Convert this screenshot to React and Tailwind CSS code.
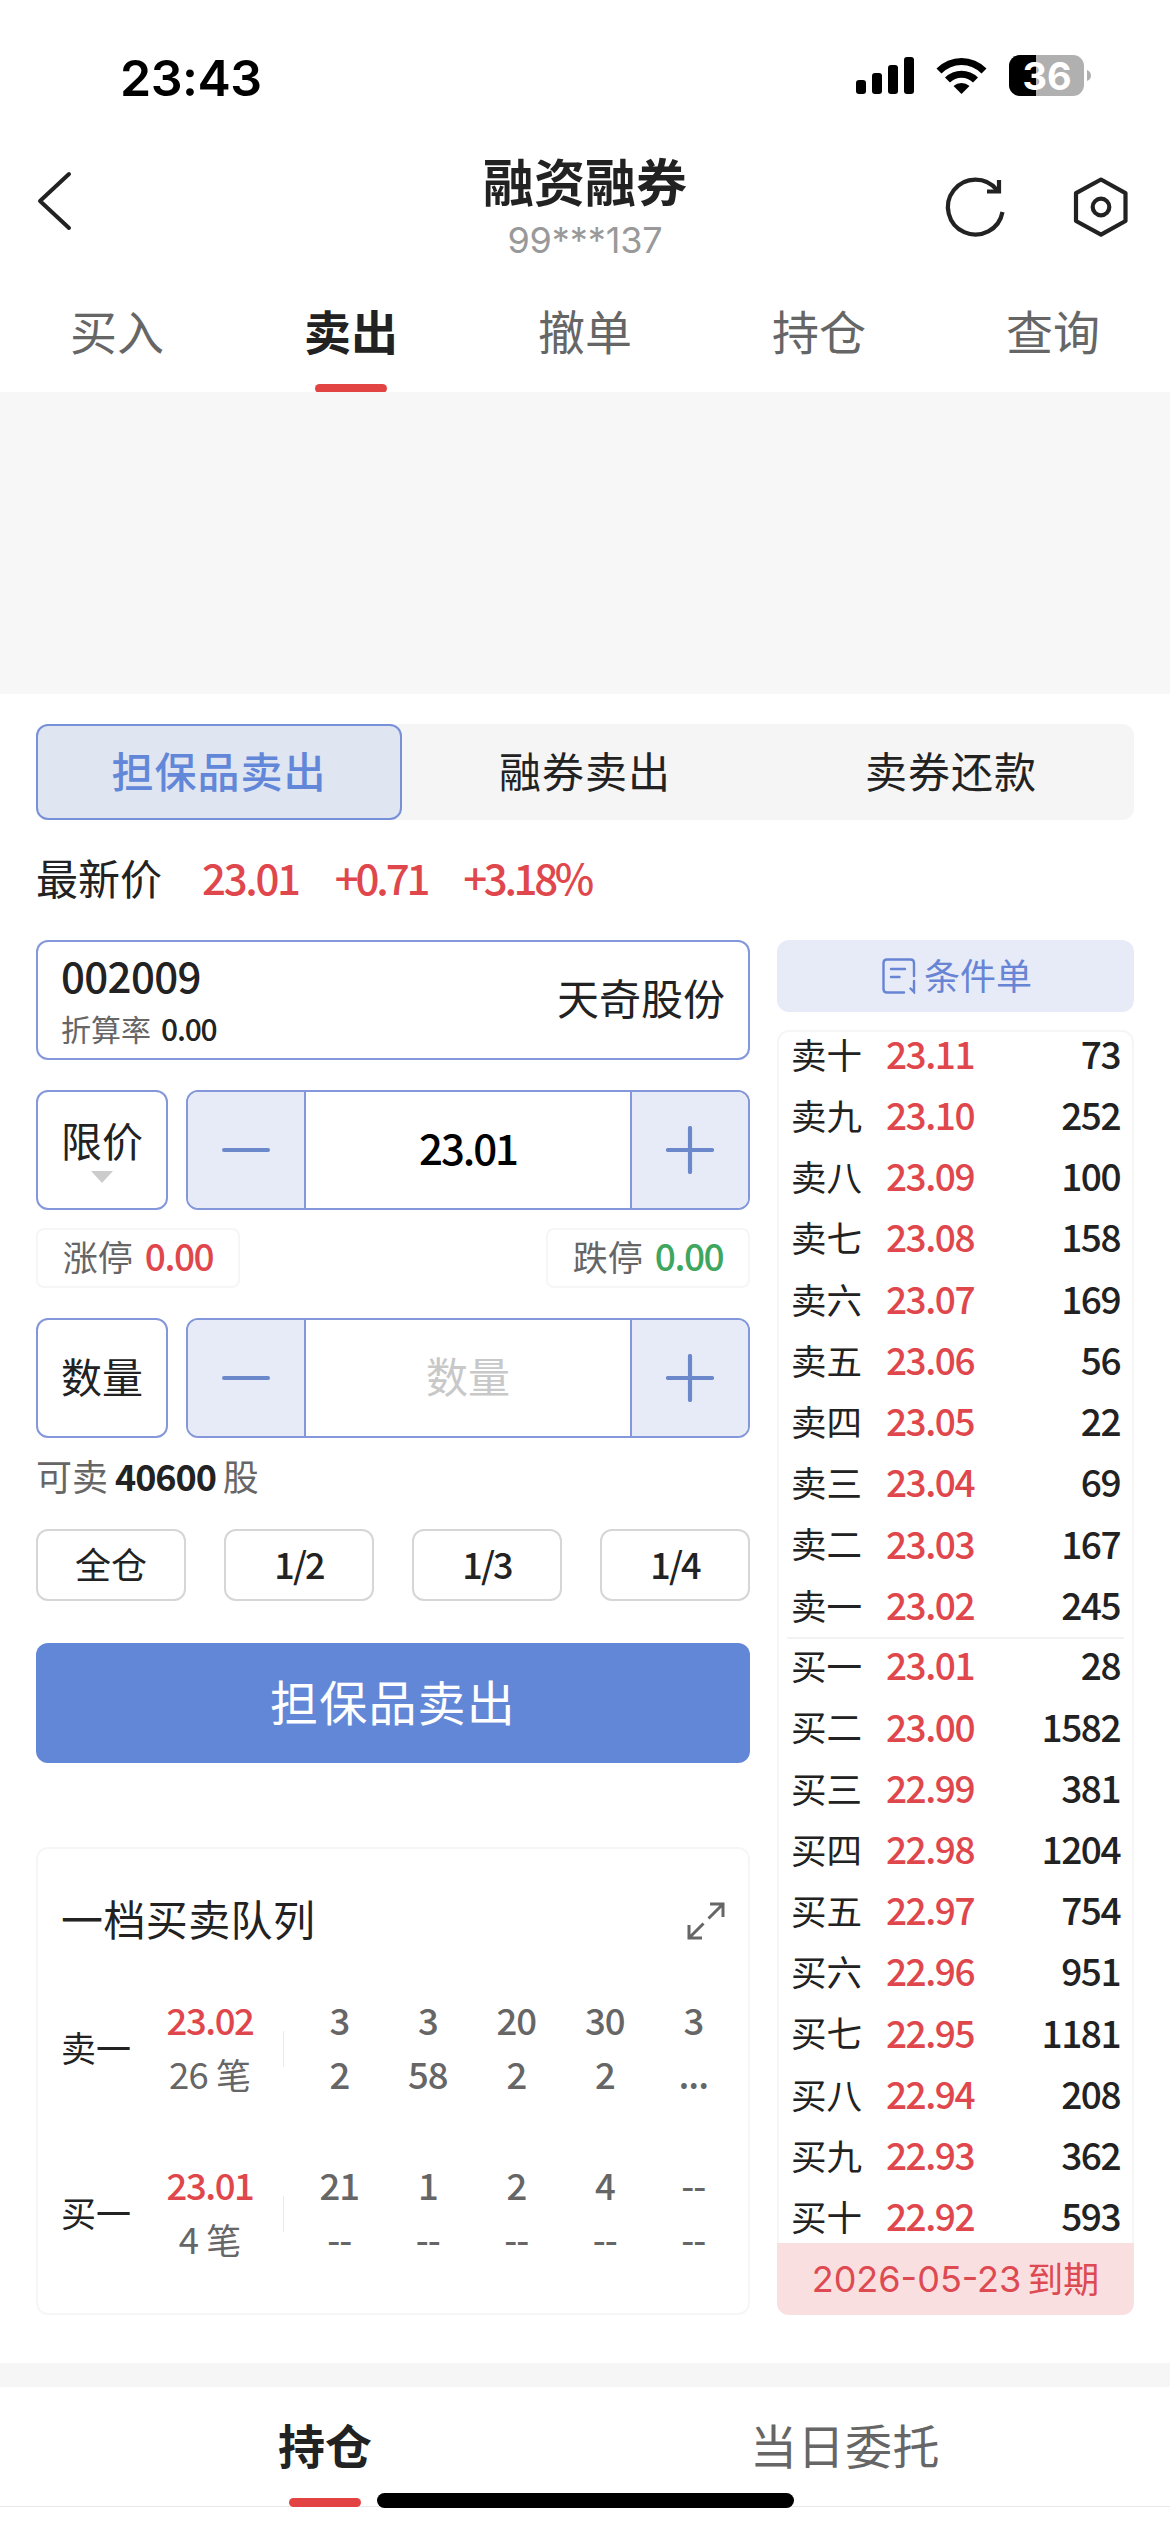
const SELLS = [
  ["卖十", "23.11", "73"],
  ["卖九", "23.10", "252"],
  ["卖八", "23.09", "100"],
  ["卖七", "23.08", "158"],
  ["卖六", "23.07", "169"],
  ["卖五", "23.06", "56"],
  ["卖四", "23.05", "22"],
  ["卖三", "23.04", "69"],
  ["卖二", "23.03", "167"],
  ["卖一", "23.02", "245"],
];

const BUYS = [
  ["买一", "23.01", "28"],
  ["买二", "23.00", "1582"],
  ["买三", "22.99", "381"],
  ["买四", "22.98", "1204"],
  ["买五", "22.97", "754"],
  ["买六", "22.96", "951"],
  ["买七", "22.95", "1181"],
  ["买八", "22.94", "208"],
  ["买九", "22.93", "362"],
  ["买十", "22.92", "593"],
];

const TABS = ["买入", "卖出", "撤单", "持仓", "查询"];
const RATIOS = ["全仓", "1/2", "1/3", "1/4"];

export default function App() {
  return (
    <div className="w-[1170px] h-[2532px] flex flex-col overflow-hidden bg-white text-[#222] leading-none font-['Noto_Sans_CJK_SC',sans-serif]">
      <StatusBar />
      <Header />
      <nav className="h-[110px] grid grid-cols-5">
        {TABS.map((tab) => (
          <Tab key={tab} label={tab} active={tab === "卖出"} />
        ))}
      </nav>
      <div className="h-[302px] bg-[#f7f7f7]" />

      <main className="h-[1669px] px-9 pt-[30px] flex flex-col">
        <div className="h-24 grid grid-cols-3 rounded-xl bg-[#f5f5f5] text-[42px] tracking-[1px]">
          <div className="pb-1 flex items-center justify-center rounded-xl border-2 border-[#7890d8] bg-[#dfe5f1] text-[#6286d8] font-medium">担保品卖出</div>
          <div className="pb-1 flex items-center justify-center">融券卖出</div>
          <div className="pb-1 flex items-center justify-center">卖券还款</div>
        </div>

        <div className="h-[120px] flex items-center">
          <Txt className="w-[166px] text-[42px]">最新价</Txt>
          <div className="flex gap-[36px] text-[42px] font-medium text-[#e0474c]">
            <Txt className="tracking-[-0.055em]">23.01</Txt>
            <Txt className="tracking-[-0.075em]">+0.71</Txt>
            <Txt className="tracking-[-0.08em]">+3.18%</Txt>
          </div>
        </div>

        <div className="flex justify-between">
          <section className="w-[714px]">
            <OrderForm />
            <QueueCard />
          </section>
          <OrderBook />
        </div>
      </main>

      <div className="h-6 bg-[#f6f6f6]" />
      <BottomTabs />
    </div>
  );
}

// bottom padding lifts the glyphs to the optical centre of their row
function Txt({ className = "", children }) {
  return <span className={`block shrink-0 pb-[0.12em] ${className}`}>{children}</span>;
}

function StatusBar() {
  return (
    <div className="h-[140px] pl-[120px] pr-[78px] pt-[54px] flex justify-between items-start text-black">
      <span className="font-['Inter',sans-serif] font-semibold text-[50px] tracking-[-0.5px] leading-[48px]">23:43</span>
      <svg width="236" height="44" viewBox="856 56 236 44">
        <rect x="856" y="82" width="10" height="14" rx="3" />
        <rect x="872" y="75" width="10" height="21" rx="3" />
        <rect x="888" y="67" width="10" height="29" rx="3" />
        <rect x="904" y="59" width="10" height="37" rx="3" />
        {/* wifi */}
        <path d="M936.500 70.500 A35 35 0 0 1 986.500 70.500 L981.500 75.500 A28 28 0 0 0 941.500 75.500 Z" />
        <path d="M945 79.500 A23.500 23.500 0 0 1 978 79.500 L973 84.500 A16.500 16.500 0 0 0 950 84.500 Z" />
        <path d="M953.500 88 A12 12 0 0 1 969.500 88 L961.500 96 Z" />
        {/* battery, 36% charged */}
        <rect x="1009" y="57" width="75" height="41" rx="11" fill="#b0b0b0" />
        <path d="M1036 57 H1020 A11 11 0 0 0 1009 68 V87 A11 11 0 0 0 1020 98 H1036 Z" />
        <path d="M1087 72 Q1091 73.500 1091 77.500 Q1091 81.500 1087 83 Z" fill="#b0b0b0" />
        <text x="1047" y="91.500" textAnchor="middle" fill="#fff" fontFamily="Inter, sans-serif" fontWeight="700" fontSize="38">36</text>
      </svg>
    </div>
  );
}

function Header() {
  return (
    <header className="h-[142px] px-9 grid grid-cols-[200px_1fr_200px]">
      <svg className="mt-[30px]" width="38" height="62" viewBox="0 0 38 62" fill="none" stroke="#222" strokeWidth="4" strokeLinecap="round" strokeLinejoin="round">
        <path d="M33 4 L4 31 L33 58" />
      </svg>
      <div className="flex flex-col items-center pt-[15px]">
        <h1 className="text-[51px] font-bold">融资融券</h1>
        <p className="mt-[16px] text-[36px] text-[#999] font-['Inter',sans-serif] tracking-[-0.1px]">99***137</p>
      </div>
      <svg className="mt-[34px] justify-self-end" width="194" height="66" viewBox="940 174 194 66" fill="none" stroke="#222" strokeWidth="4.200">
        <path d="M1002.500 212 A27.500 27.500 0 1 1 997 190" />
        <path d="M999 180 V191.500 H987" />
        <path d="M1101 179.500 L1125.500 193.200 V221 L1101 234.700 L1076 221 V193.200 Z" strokeLinejoin="round" />
        <circle cx="1101" cy="207" r="8.300" />
      </svg>
    </header>
  );
}

function Tab({ label, active }) {
  return (
    <div className="flex flex-col items-center justify-between pt-[24px]">
      <span className={active ? "text-[47px] font-bold" : "text-[47px] text-[#666]"}>{label}</span>
      {active && <i className="w-[72px] h-[9px] -mb-px rounded-full bg-[#e24444]" />}
    </div>
  );
}

function OrderForm() {
  return (
    <div className="flex flex-col">
      <div className="h-[120px] px-[23px] flex justify-between items-center rounded-xl border-2 border-[#8397da]">
        <div className="flex flex-col gap-[12px]">
          <Txt className="text-[42px] font-medium tracking-[-0.015em]">002009</Txt>
          <div className="flex items-center gap-[10px]">
            <Txt className="text-[30px] text-[#666]">折算率</Txt>
            <Txt className="text-[30px] font-medium tracking-[-0.04em]">0.00</Txt>
          </div>
        </div>
        <Txt className="text-[42px]">天奇股份</Txt>
      </div>

      <div className="mt-[30px] flex gap-[18px]">
        <div className="w-[132px] h-[120px] pt-[27px] flex flex-col items-center rounded-xl border-2 border-[#8397da]">
          <span className="text-[41px]">限价</span>
          <svg className="mt-[11px]" width="22" height="12" viewBox="0 0 22 12" fill="#ccc">
            <path d="M0 0 H22 L11 12 Z" />
          </svg>
        </div>
        <Stepper>
          <Txt className="text-[42px] font-medium tracking-[-0.05em] text-black">23.01</Txt>
        </Stepper>
      </div>

      <div className="mt-[18px] flex justify-between">
        <LimitChip label="涨停" color="text-[#e0474c]" />
        <LimitChip label="跌停" color="text-[#3fa660]" />
      </div>

      <div className="mt-[30px] flex gap-[18px]">
        <div className="w-[132px] h-[120px] flex items-center justify-center rounded-xl border-2 border-[#8397da]">
          <Txt className="text-[41px]">数量</Txt>
        </div>
        <Stepper>
          <Txt className="text-[42px] text-[#c8c8c8]">数量</Txt>
        </Stepper>
      </div>

      <div className="mt-[20px] h-[38px] flex items-center gap-[7px] text-[36px] text-[#666]">
        <Txt>可卖</Txt>
        <Txt className="font-bold tracking-[-0.03em] text-[#222]">40600</Txt>
        <Txt>股</Txt>
      </div>

      <div className="mt-[33px] flex justify-between">
        {RATIOS.map((r) => (
          <div key={r} className="w-[150px] h-[72px] flex items-center justify-center rounded-xl border-2 border-[#d6d6d6]">
            <Txt className={r === "全仓" ? "text-[36px]" : "text-[36px] font-medium tracking-[-0.05em]"}>{r}</Txt>
          </div>
        ))}
      </div>

      <button className="mt-[42px] h-[120px] pb-[6px] rounded-xl bg-[#6387d7] text-white text-[48px] tracking-[1.2px]">担保品卖出</button>
    </div>
  );
}

function Stepper({ children }) {
  return (
    <div className="w-[564px] h-[120px] grid grid-cols-[118px_1fr_118px] rounded-xl border-2 border-[#8397da] overflow-hidden">
      <div className="flex items-center justify-center bg-[#e6ebf7] border-r-2 border-[#8397da]">
        <i className="w-12 h-1 rounded-full bg-[#6b88cb]" />
      </div>
      <div className="flex items-center justify-center">{children}</div>
      <div className="flex items-center justify-center bg-[#e6ebf7] border-l-2 border-[#8397da]">
        <svg width="48" height="48" viewBox="0 0 48 48" stroke="#6b88cb" strokeWidth="4.200" strokeLinecap="round">
          <path d="M2 24 H46 M24 2 V46" />
        </svg>
      </div>
    </div>
  );
}

function LimitChip({ label, color }) {
  return (
    <div className="h-[60px] w-[204px] flex items-center justify-center gap-3 rounded-lg border-2 border-[#f6f6f6]">
      <Txt className="text-[35px] text-[#666]">{label}</Txt>
      <Txt className={`text-[37px] font-medium tracking-[-0.04em] ${color}`}>0.00</Txt>
    </div>
  );
}

function QueueCard() {
  return (
    <div className="mt-[84px] h-[468px] px-[23px] pt-[51px] rounded-xl border-2 border-[#f6f6f6]">
      <div className="h-[42px] flex items-center justify-between">
        <Txt className="text-[42px] tracking-[0.4px]">一档买卖队列</Txt>
        <svg width="38" height="38" viewBox="0 0 38 38" fill="none" stroke="#666" strokeWidth="3">
          <path d="M23 2 H36 V15 M35.500 2.500 L21.500 16.500 M15 36 H2 V23 M2.500 35.500 L16.500 21.500" />
        </svg>
      </div>
      <QueueRow
        className="mt-[53px]"
        side="卖一"
        price="23.02"
        count="26"
        cells={["3", "3", "20", "30", "3", "2", "58", "2", "2", "..."]}
      />
      <QueueRow
        className="mt-[57px]"
        side="买一"
        price="23.01"
        count="4"
        cells={["21", "1", "2", "4", "--", "--", "--", "--", "--", "--"]}
      />
    </div>
  );
}

function QueueRow({ side, price, count, cells, className }) {
  return (
    <div className={`h-[108px] flex items-center ${className}`}>
      <Txt className="w-[88px] mb-px text-[35px]">{side}</Txt>
      <div className="w-[122px] shrink-0 h-full flex flex-col items-center text-[36.5px]">
        <div className="h-[54px] flex items-center">
          <Txt className="font-medium tracking-[-0.04em] text-[#e0474c]">{price}</Txt>
        </div>
        <div className="h-[54px] flex items-center gap-[8px] text-[#666]">
          <Txt className="tracking-[-0.02em]">{count}</Txt>
          <Txt className="text-[35px]">笔</Txt>
        </div>
      </div>
      <i className="w-px shrink-0 h-9 ml-[12px] bg-[#eaeaea]" />
      <div className="ml-[11px] shrink-0 grid grid-cols-[repeat(5,88.5px)] grid-rows-[54px_54px] text-[#666]">
        {cells.map((c, i) => (
          <div key={i} className="flex items-center justify-center">
            <Txt className="text-[36.5px] font-medium tracking-[-0.03em]">{c}</Txt>
          </div>
        ))}
      </div>
    </div>
  );
}

function OrderBook() {
  return (
    <aside className="w-[357px] flex flex-col">
      <div className="h-[72px] pl-[3px] flex items-center justify-center gap-2 rounded-xl bg-[#e7ebf7] text-[#6884d4]">
        <svg width="34" height="36" viewBox="0 0 34 36" fill="none" stroke="#6884d4" strokeWidth="2.400" strokeLinecap="round">
          <path d="M32 18 V5 Q32 1.500 28.500 1.500 H5 Q1.500 1.500 1.500 5 V31 Q1.500 34.500 5 34.500 H22" />
          <path d="M9 11 H23 M9 19 H17.500 M32 23 V34 L28.500 30.500" />
        </svg>
        <Txt className="text-[36px]">条件单</Txt>
      </div>
      <div className="mt-[18px] h-[1285px] flex flex-col rounded-xl border-2 border-[#f6f6f6] border-b-0">
        <BookSide rows={SELLS} />
        <div className="mx-2 my-[5px] h-[2px] bg-[#f2f2f2] shrink-0" />
        <BookSide rows={BUYS} />
        <div className="-mx-[2px] flex-1 flex items-center justify-center gap-1.5 rounded-b-xl bg-[#fadfe1] text-[36px] text-[#dd4a52]">
          <span className="font-['Inter',sans-serif]">2026-05-23</span>
          <Txt>到期</Txt>
        </div>
      </div>
    </aside>
  );
}

function BookSide({ rows }) {
  return (
    <div className="h-[601px] shrink-0 flex flex-col justify-between -mt-[1.5px]">
      {rows.map(([name, price, qty]) => (
        <div key={name} className="h-[50px] px-3 flex items-center">
          <Txt className="w-[88px] text-[35.5px]">{name}</Txt>
          <Txt className="w-[102px] text-center text-[37px] font-medium tracking-[-0.04em] text-[#e0474c]">{price}</Txt>
          <Txt className="flex-1 text-right text-[37px] font-medium tracking-[-0.04em]">{qty}</Txt>
        </div>
      ))}
    </div>
  );
}

function BottomTabs() {
  return (
    <footer className="relative h-[145px] px-[65px] grid grid-cols-2">
      <div className="h-[120px] flex flex-col items-center justify-between pt-[33px]">
        <span className="text-[47px] font-bold">持仓</span>
        <i className="z-10 w-[72px] h-[9px] rounded-full bg-[#e24444]" />
      </div>
      <div className="h-[120px] flex justify-center pt-[33px]">
        <span className="text-[47px] tracking-[0.500px] text-[#666]">当日委托</span>
      </div>
      <div className="absolute left-0 right-0 top-[119px] h-px bg-[#e8e8e8]" />
      {/* home indicator */}
      <div className="absolute left-[377px] top-[106px] w-[417px] h-[15px] rounded-full bg-black" />
    </footer>
  );
}
